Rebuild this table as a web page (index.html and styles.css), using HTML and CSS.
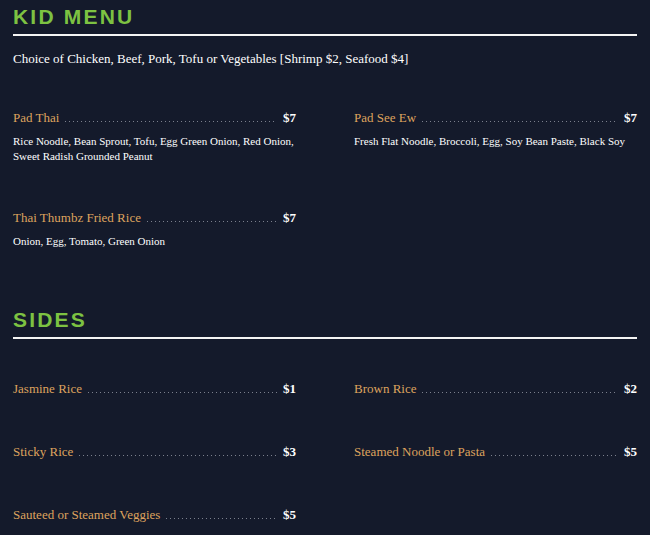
FILE: index.html
```html
<!DOCTYPE html>
<html>
<head>
<meta charset="utf-8">
<link rel="stylesheet" href="styles.css">
</head>
<body>
<div class="page">
  <section class="section">
    <h2 class="section-title">KID MENU</h2>
    <p class="section-note">Choice of Chicken, Beef, Pork, Tofu or Vegetables [Shrimp $2, Seafood $4]</p>
    <div class="items">
      <div class="item">
        <div class="item-head"><span class="item-name">Pad Thai</span><span class="leader"></span><span class="item-price">$7</span></div>
        <p class="item-desc">Rice Noodle, Bean Sprout, Tofu, Egg Green Onion, Red Onion, Sweet Radish Grounded Peanut</p>
      </div>
      <div class="item">
        <div class="item-head"><span class="item-name">Pad See Ew</span><span class="leader"></span><span class="item-price">$7</span></div>
        <p class="item-desc">Fresh Flat Noodle, Broccoli, Egg, Soy Bean Paste, Black Soy</p>
      </div>
      <div class="item">
        <div class="item-head"><span class="item-name">Thai Thumbz Fried Rice</span><span class="leader"></span><span class="item-price">$7</span></div>
        <p class="item-desc">Onion, Egg, Tomato, Green Onion</p>
      </div>
    </div>
  </section>
  <section class="section sides">
    <h2 class="section-title">SIDES</h2>
    <div class="items side-items">
      <div class="item">
        <div class="item-head"><span class="item-name">Jasmine Rice</span><span class="leader"></span><span class="item-price">$1</span></div>
      </div>
      <div class="item">
        <div class="item-head"><span class="item-name">Brown Rice</span><span class="leader"></span><span class="item-price">$2</span></div>
      </div>
      <div class="item">
        <div class="item-head"><span class="item-name">Sticky Rice</span><span class="leader"></span><span class="item-price">$3</span></div>
      </div>
      <div class="item">
        <div class="item-head"><span class="item-name">Steamed Noodle or Pasta</span><span class="leader"></span><span class="item-price">$5</span></div>
      </div>
      <div class="item">
        <div class="item-head"><span class="item-name">Sauteed or Steamed Veggies</span><span class="leader"></span><span class="item-price">$5</span></div>
      </div>
    </div>
  </section>
</div>
</body>
</html>
```

FILE: styles.css
```css
html, body {
  margin: 0;
  padding: 0;
  background: #141a2b;
}
body {
  font-family: "Liberation Serif", "Times New Roman", serif;
  color: #ffffff;
}
.page {
  padding: 6px 13px 0 13px;
  width: 624px;
}
.section-title {
  margin: 0;
  font-family: "Liberation Sans", Arial, sans-serif;
  font-weight: bold;
  font-size: 21px;
  letter-spacing: 2.2px;
  line-height: 22px;
  color: #7dc242;
  padding-bottom: 6px;
  border-bottom: 2px solid #f4f4f4;
}
.section-note {
  margin: 14px 0 0 0;
  font-size: 13px;
  line-height: 18px;
}
.items {
  display: grid;
  grid-template-columns: 283px 283px;
  column-gap: 58px;
  row-gap: 45px;
  margin-top: 41px;
}
.item-head {
  display: flex;
  align-items: baseline;
  font-size: 13px;
  line-height: 18px;
}
.item-name {
  color: #dea35e;
}
.leader {
  flex: 1;
  height: 1px;
  margin: 0 6px;
  background-image: linear-gradient(to right, #7b808d 1px, transparent 1px);
  background-size: 4px 1px;
  background-repeat: repeat-x;
}
.item-price {
  font-weight: bold;
}
.item-desc {
  margin: 7px 0 0 0;
  font-size: 11px;
  line-height: 15px;
}
.sides {
  margin-top: 60px;
}
.side-items {
  margin-top: 41px;
}
```
